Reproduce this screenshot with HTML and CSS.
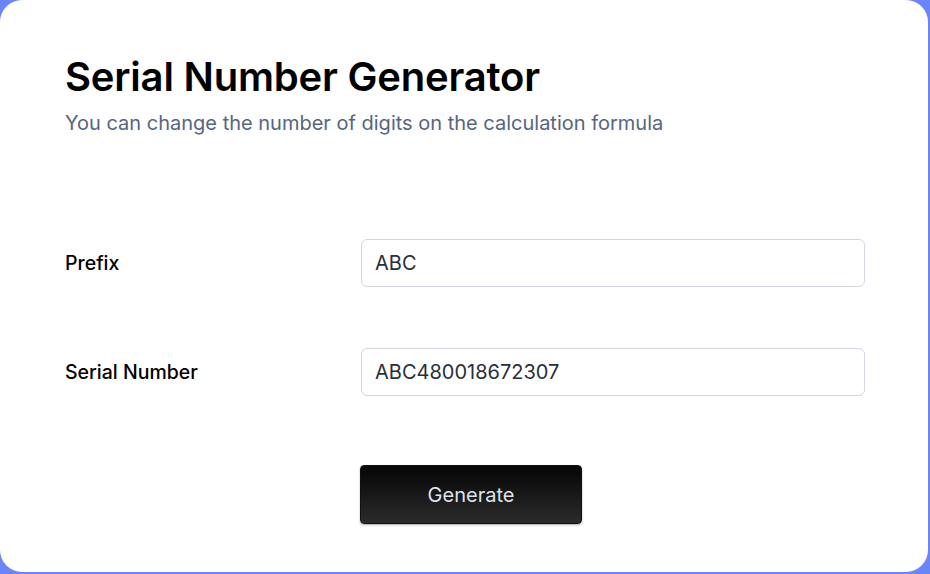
FILE: index.html
```html
<!DOCTYPE html>
<html>
<head>
<meta charset="utf-8">
<link rel="stylesheet" href="styles.css">
</head>
<body>
<div class="card">
  <h1 class="title">Serial Number Generator</h1>
  <p class="subtitle">You can change the number of digits on the calculation formula</p>
  <div class="form">
    <div class="row">
      <label class="label">Prefix</label>
      <div class="input">ABC</div>
    </div>
    <div class="row">
      <label class="label">Serial Number</label>
      <div class="input">ABC480018672307</div>
    </div>
    <div class="actions">
      <button class="btn">Generate</button>
    </div>
  </div>
</div>
</body>
</html>
```
FILE: styles.css
```css
html, body {
  margin: 0;
  padding: 0;
  width: 930px;
  height: 574px;
  background: #6a85f7;
  overflow: hidden;
  font-family: Inter, "Noto Sans", sans-serif;
}
.card {
  box-sizing: border-box;
  width: 928px;
  height: 572px;
  background: #fff;
  border-radius: 22px;
  padding: 52px 65px 0 65px;
}
.title {
  margin: 0;
  font-size: 40px;
  font-weight: 600;
  line-height: 50px;
  color: #000;
  letter-spacing: -0.2px;
}
.subtitle {
  margin: 7px 0 0 0;
  font-size: 20px;
  line-height: 28px;
  color: #56657f;
}
.form {
  margin-top: 102px;
}
.row {
  display: grid;
  grid-template-columns: 296px 504px;
  align-items: center;
  margin-bottom: 61px;
}
.label {
  font-size: 19.5px;
  font-weight: 500;
  color: #000;
}
.input {
  box-sizing: border-box;
  height: 48px;
  border: 1px solid #d6d6e2;
  border-radius: 6px;
  padding: 0 13px;
  display: flex;
  align-items: center;
  font-size: 20px;
  color: #2a2f3b;
}
.actions {
  display: flex;
  padding-left: 295px;
  margin-top: 8px;
}
.btn {
  width: 222px;
  height: 59px;
  margin-top: 8px;
  border: 1px solid #111;
  border-radius: 4px;
  background: linear-gradient(#050505, #2b2b2b);
  color: #dfe3ec;
  font-family: Inter, "Noto Sans", sans-serif;
  font-size: 20px;
  box-shadow: 0 1px 2px rgba(0,0,0,0.35);
}
```
